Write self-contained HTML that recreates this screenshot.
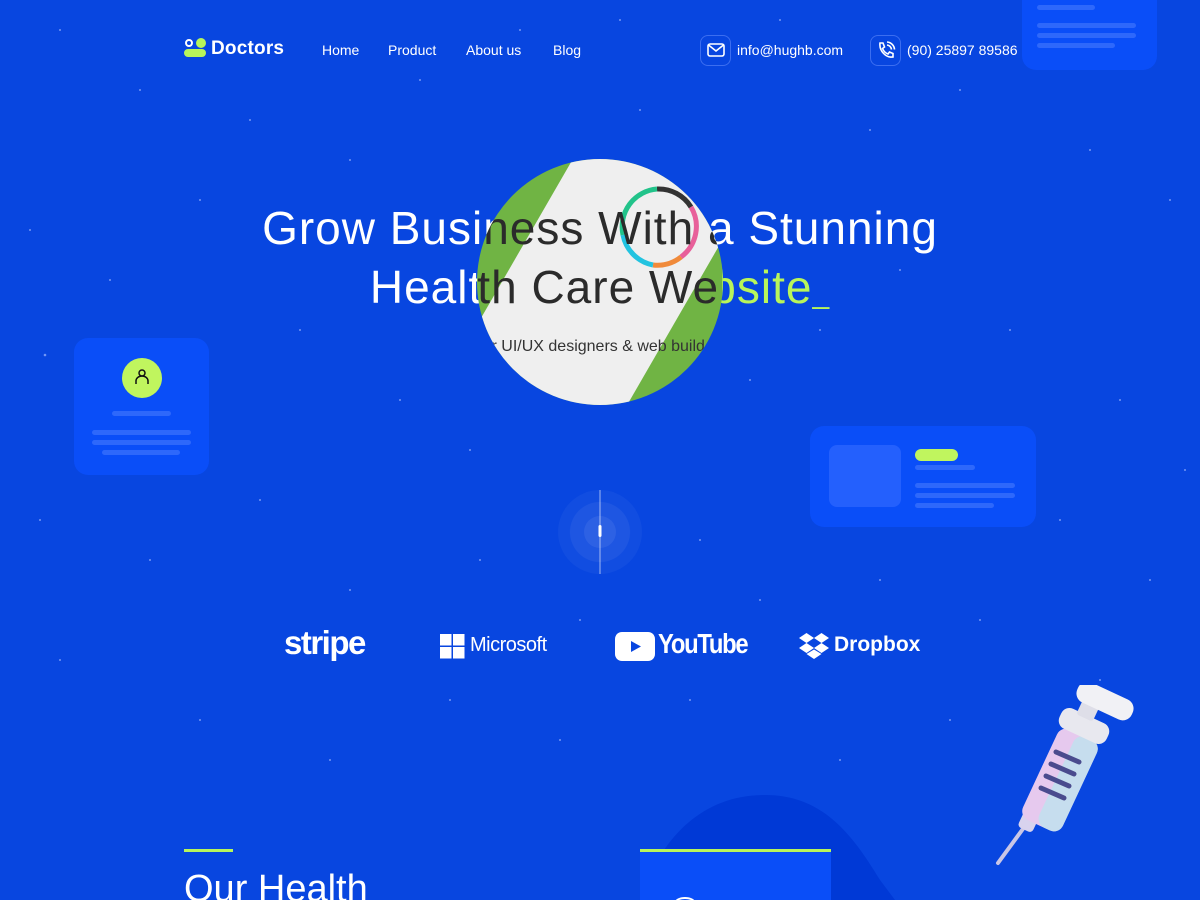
<!DOCTYPE html>
<html><head><meta charset="utf-8"><style>
*{margin:0;padding:0;box-sizing:border-box}
html,body{width:1200px;height:900px;overflow:hidden}
body{background:#0846e0;font-family:"Liberation Sans",sans-serif;color:#fff;position:relative}
.abs{position:absolute}
.nav a{position:absolute;top:42px;font-size:14px;color:#fff}
.card{position:absolute;background:#0a4ef8;border-radius:14px}
.bar{position:absolute;background:#2e68fb;border-radius:4px}
.t{position:absolute;left:0;width:1200px;text-align:center;font-size:46px;letter-spacing:1px;white-space:nowrap}
.sub{position:absolute;left:0;width:1200px;text-align:center;font-size:16px;top:338px}
</style></head><body>
<svg class="abs" style="left:0;top:0" width="1200" height="900">
<g fill="#9fb8ff" opacity=".7">
<circle cx="60" cy="30" r="1"/><circle cx="140" cy="90" r="1"/><circle cx="250" cy="120" r="1"/><circle cx="350" cy="160" r="1"/><circle cx="420" cy="80" r="1"/><circle cx="520" cy="30" r="1"/><circle cx="640" cy="110" r="1"/><circle cx="780" cy="20" r="1"/><circle cx="870" cy="130" r="1"/><circle cx="960" cy="90" r="1"/><circle cx="1090" cy="150" r="1"/><circle cx="1170" cy="200" r="1"/><circle cx="30" cy="230" r="1"/><circle cx="110" cy="280" r="1"/><circle cx="200" cy="200" r="1"/><circle cx="300" cy="330" r="1"/><circle cx="400" cy="400" r="1"/><circle cx="470" cy="450" r="1"/><circle cx="750" cy="380" r="1"/><circle cx="820" cy="330" r="1"/><circle cx="900" cy="270" r="1"/><circle cx="1010" cy="330" r="1"/><circle cx="1120" cy="400" r="1"/><circle cx="1060" cy="520" r="1"/><circle cx="1150" cy="580" r="1"/><circle cx="40" cy="520" r="1"/><circle cx="150" cy="560" r="1"/><circle cx="260" cy="500" r="1"/><circle cx="350" cy="590" r="1"/><circle cx="480" cy="560" r="1"/><circle cx="700" cy="540" r="1"/><circle cx="760" cy="600" r="1"/><circle cx="880" cy="580" r="1"/><circle cx="980" cy="620" r="1"/><circle cx="60" cy="660" r="1"/><circle cx="200" cy="720" r="1"/><circle cx="330" cy="760" r="1"/><circle cx="450" cy="700" r="1"/><circle cx="560" cy="740" r="1"/><circle cx="690" cy="700" r="1"/><circle cx="840" cy="760" r="1"/><circle cx="950" cy="720" r="1"/><circle cx="1100" cy="680" r="1"/><circle cx="45" cy="355" r="1.3"/><circle cx="1185" cy="470" r="1"/><circle cx="580" cy="620" r="1"/><circle cx="620" cy="20" r="1"/>
</g>
<path d="M640 900 C660 840 700 795 765 795 C820 795 850 830 880 880 L895 900Z" fill="#0039d6"/>
</svg>

<!-- logo -->
<div class="abs" style="left:185px;top:39px;width:8px;height:8px;border:2px solid #fff;border-radius:50%"></div>
<div class="abs" style="left:196px;top:38px;width:10px;height:10px;background:#b8f55a;border-radius:50%"></div>
<div class="abs" style="left:184px;top:49px;width:22px;height:8px;background:#b8f55a;border-radius:4px"></div>
<div class="abs" style="left:211px;top:38px;font-size:19px;font-weight:bold;letter-spacing:.2px">Doctors</div>
<div class="nav"><a style="left:322px">Home</a><a style="left:388px">Product</a><a style="left:466px">About us</a><a style="left:553px">Blog</a></div>

<!-- top right card -->
<div class="card" style="left:1022px;top:-20px;width:135px;height:90px"></div>
<div class="bar" style="left:1037px;top:5px;width:58px;height:5px"></div>
<div class="bar" style="left:1037px;top:23px;width:99px;height:5px"></div>
<div class="bar" style="left:1037px;top:33px;width:99px;height:5px"></div>
<div class="bar" style="left:1037px;top:43px;width:78px;height:5px"></div>

<!-- contact -->
<div class="abs" style="left:700px;top:35px;width:31px;height:31px;border:1.5px solid #3c6ef0;border-radius:8px"></div>
<svg class="abs" style="left:707px;top:42px" width="18" height="16"><rect x="1" y="2" width="16" height="12" rx="2" fill="none" stroke="#fff" stroke-width="1.6"/><path d="M1.5 3 L9 9 L16.5 3" fill="none" stroke="#fff" stroke-width="1.6"/></svg>
<div class="abs" style="left:737px;top:42px;font-size:14px">info@hughb.com</div>
<div class="abs" style="left:870px;top:35px;width:31px;height:31px;border:1.5px solid #3c6ef0;border-radius:8px"></div>
<svg class="abs" style="left:876px;top:41px" width="20" height="20" fill="none" stroke="#fff" stroke-width="1.6"><path d="M4 2 L7 2 L8.5 6 L6.5 7.5 C7.5 10 9.5 12 12 13 L13.5 11 L17 12.5 L17 16 C10 17 3 10 4 2Z"/><path d="M11 4 A5 5 0 0 1 15.5 8.5 M11 1 A8 8 0 0 1 18.5 8.5"/></svg>
<div class="abs" style="left:907px;top:42px;font-size:14px">(90) 25897 89586</div>

<!-- heading white -->
<div class="t" style="top:201px">Grow Business With a Stunning</div>
<div class="t" style="top:260px">Health Care We<span style="color:#b8f55a">bsite</span><span style="color:#b8f55a;font-size:30px">_</span></div>

<!-- circle image with dark text -->
<div class="abs" style="left:477px;top:159px;width:246px;height:246px;border-radius:50%;overflow:hidden;background:#70b444">
 <div class="abs" style="left:38px;top:-77px;width:170px;height:400px;background:#efefef;transform:rotate(30deg)"></div>
 <svg class="abs" style="left:138px;top:26px" width="84" height="84" fill="none" stroke-width="5"><path d="M42 4 A38 38 0 0 1 76 22" stroke="#333"/><path d="M76 22 A38 38 0 0 1 66 72" stroke="#e8609a"/><path d="M66 72 A38 38 0 0 1 38 80" stroke="#f08a3a"/><path d="M38 80 A38 38 0 0 1 8 50" stroke="#22c3e0"/><path d="M8 50 A38 38 0 0 1 42 4" stroke="#22c38a"/></svg>
 <div class="abs" style="left:-477px;top:-159px;width:1200px;height:600px">
  <div class="t" style="top:201px;color:#2b2b2b">Grow Business With a Stunning</div>
  <div class="t" style="top:260px;color:#2b2b2b">Health Care We<span style="color:#b8f55a">bsite</span></div>
  <div class="sub" style="color:#333">For UI/UX designers &amp; web builders</div>
 </div>
</div>

<!-- left card -->
<div class="card" style="left:74px;top:338px;width:135px;height:137px"></div>
<div class="abs" style="left:122px;top:358px;width:40px;height:40px;border-radius:50%;background:#c0f55e"></div>
<svg class="abs" style="left:134px;top:368px" width="16" height="18" fill="none" stroke="#111" stroke-width="1.5"><circle cx="8" cy="5" r="3"/><path d="M2 16 V13 A6 5 0 0 1 14 13 V16"/></svg>
<div class="bar" style="left:112px;top:411px;width:59px;height:5px"></div>
<div class="bar" style="left:92px;top:430px;width:99px;height:5px"></div>
<div class="bar" style="left:92px;top:440px;width:99px;height:5px"></div>
<div class="bar" style="left:102px;top:450px;width:78px;height:5px"></div>

<!-- right card -->
<div class="card" style="left:810px;top:426px;width:226px;height:101px"></div>
<div class="abs" style="left:829px;top:445px;width:72px;height:62px;background:#2460fd;border-radius:8px"></div>
<div class="abs" style="left:915px;top:449px;width:43px;height:12px;background:#c0f55e;border-radius:6px"></div>
<div class="bar" style="left:915px;top:465px;width:60px;height:5px"></div>
<div class="bar" style="left:915px;top:483px;width:100px;height:5px"></div>
<div class="bar" style="left:915px;top:493px;width:100px;height:5px"></div>
<div class="bar" style="left:915px;top:503px;width:79px;height:5px"></div>

<!-- scroll indicator -->
<svg class="abs" style="left:555px;top:487px" width="90" height="90"><circle cx="45" cy="45" r="42" fill="#ffffff" opacity=".04"/><circle cx="45" cy="45" r="30" fill="#ffffff" opacity=".05" stroke="#ffffff" stroke-opacity=".12"/><circle cx="45" cy="45" r="16" fill="#ffffff" opacity=".07"/><line x1="45" y1="3" x2="45" y2="87" stroke="#fff" stroke-opacity=".6" stroke-width="1"/><rect x="43.5" y="38" width="3" height="12" rx="1.5" fill="#fff"/></svg>

<!-- logos -->
<div class="abs" style="left:284px;top:624px;font-size:33px;font-weight:bold;letter-spacing:-1.5px">stripe</div>
<svg class="abs" style="left:440px;top:634px" width="25" height="25" fill="#fff"><rect width="11.5" height="11.5"/><rect x="13" width="11.5" height="11.5"/><rect y="13" width="11.5" height="11.5"/><rect x="13" y="13" width="11.5" height="11.5"/></svg>
<div class="abs" style="left:470px;top:634px;font-size:20px;letter-spacing:-.5px">Microsoft</div>
<svg class="abs" style="left:615px;top:632px" width="40" height="29"><rect width="40" height="29" rx="7" fill="#fff"/><path d="M16 9 L26 14.5 L16 20Z" fill="#0846e0"/></svg>
<div class="abs" style="left:658px;top:628px;font-size:28px;font-weight:bold;letter-spacing:-1.5px;transform:scaleX(.85);transform-origin:left">YouTube</div>
<svg class="abs" style="left:799px;top:633px" width="30" height="26" fill="#fff"><path d="M7.5 0 L15 5 L7.5 10 L0 5Z M22.5 0 L30 5 L22.5 10 L15 5Z M7.5 10 L15 15 L7.5 20 L0 15Z M22.5 10 L30 15 L22.5 20 L15 15Z M15 16.5 L22.5 21 L15 26 L7.5 21Z"/></svg>
<div class="abs" style="left:834px;top:633px;font-size:21px;font-weight:bold">Dropbox</div>

<!-- syringe -->
<svg class="abs" style="left:990px;top:685px" width="160" height="185">
<line x1="38" y1="137" x2="8" y2="178" stroke="#c9c6e6" stroke-width="4" stroke-linecap="round"/>
<rect x="32" y="120" width="16" height="26" rx="4" fill="#d8d3ee" transform="rotate(25 40 133)"/>
<rect x="48" y="45" width="44" height="100" rx="10" fill="#e6c9ee" transform="rotate(25 70 95)"/>
<rect x="66" y="45" width="26" height="100" rx="10" fill="#b8e6ee" opacity=".7" transform="rotate(25 70 95)"/>
<g stroke="#4a4b8e" stroke-width="5" stroke-linecap="round"><line x1="66" y1="67" x2="89" y2="77"/><line x1="61" y1="79" x2="84" y2="89"/><line x1="56" y1="91" x2="79" y2="101"/><line x1="51" y1="103" x2="74" y2="113"/></g>
<rect x="68" y="30" width="52" height="22" rx="9" fill="#e8e8ef" transform="rotate(25 94 41)"/>
<rect x="90" y="12" width="18" height="22" rx="3" fill="#dedee8" transform="rotate(25 99 23)"/>
<rect x="85" y="5" width="60" height="22" rx="10" fill="#f1f1f5" transform="rotate(25 115 16)"/>
</svg>

<!-- bottom -->
<div class="abs" style="left:184px;top:849px;width:49px;height:3px;background:#b8f55a"></div>
<div class="abs" style="left:184px;top:868px;font-size:38px">Our Health</div>
<div class="abs" style="left:640px;top:849px;width:191px;height:3px;background:#b8f55a"></div>
<div class="abs" style="left:640px;top:852px;width:191px;height:60px;background:#0a4ef8"></div>
<div class="abs" style="left:675px;top:897px;width:20px;height:10px;border:2px solid #fff;border-radius:50%"></div>
</body></html>
